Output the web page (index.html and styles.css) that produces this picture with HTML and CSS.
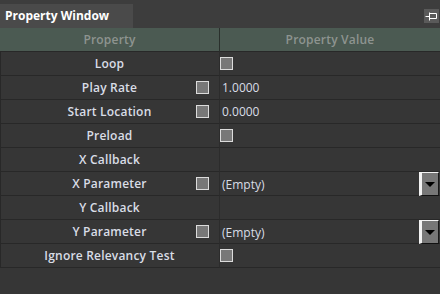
FILE: index.html
```html
<!DOCTYPE html>
<html lang="en">
<head>
  <meta charset="UTF-8">
  <title>Property Window</title>
  <link rel="stylesheet" href="styles.css">
</head>
<body>
  <div class="window">
    <div class="titlebar">
      <div class="tab">Property Window</div>
      <div class="pin">
        <svg width="15" height="14" viewBox="0 0 15 14">
          <path d="M1.5 7.5H5.5M5.5 3.5V11.5M5.5 4.5H12.5V9.5H5.5" fill="none" stroke="#fff" stroke-width="1"/>
        </svg>
      </div>
    </div>

    <div class="grid">
      <div class="head name">Property</div>
      <div class="head value">Property Value</div>

      <div class="cell name"><span class="label">Loop</span></div>
      <div class="cell value"><span class="check"></span></div>

      <div class="cell name"><span class="label">Play Rate</span><span class="check"></span></div>
      <div class="cell value"><span class="text">1.0000</span></div>

      <div class="cell name"><span class="label">Start Location</span><span class="check"></span></div>
      <div class="cell value"><span class="text">0.0000</span></div>

      <div class="cell name"><span class="label">Preload</span></div>
      <div class="cell value"><span class="check"></span></div>

      <div class="cell name"><span class="label">X Callback</span></div>
      <div class="cell value"></div>

      <div class="cell name"><span class="label">X Parameter</span><span class="check"></span></div>
      <div class="cell value"><span class="text">(Empty)</span><span class="drop"></span></div>

      <div class="cell name"><span class="label">Y Callback</span></div>
      <div class="cell value"></div>

      <div class="cell name"><span class="label">Y Parameter</span><span class="check"></span></div>
      <div class="cell value"><span class="text">(Empty)</span><span class="drop"></span></div>

      <div class="cell name"><span class="label">Ignore Relevancy Test</span></div>
      <div class="cell value"><span class="check"></span></div>
    </div>
  </div>
</body>
</html>
```

FILE: styles.css
```css
:root {
  --bar-color: #3d3d3d;
  --tab-color: #4a4a4a;
  --head-color: #4b5a52;
  --row-color: #363636;
  --line-color: #282828;
  --text-color: #d9dde6;
  --head-text: #8e9490;
  --body-font: "Open Sans", "Noto Sans", sans-serif;
}

* {
  margin: 0;
  padding: 0;
  box-sizing: border-box;
  font-family: var(--body-font);
}

body {
  width: 440px;
  height: 294px;
  background: var(--row-color);
  overflow: hidden;
}

.window {
  display: flex;
  flex-direction: column;
  height: 100%;
}

.titlebar {
  display: flex;
  justify-content: space-between;
  align-items: flex-start;
  height: 28px;
  background: var(--bar-color);
}

.tab {
  width: 133px;
  height: 24px;
  margin-top: 4px;
  padding-left: 5px;
  background: var(--tab-color);
  color: #fff;
  font-size: 12px;
  font-weight: 700;
  line-height: 24px;
}

.pin {
  width: 15px;
  height: 14px;
  margin-top: 9px;
  margin-right: 1px;
  background: #5a5a5a;
}

.pin svg {
  display: block;
}

.grid {
  display: grid;
  grid-template-columns: 220px 220px;
  grid-auto-rows: 24px;
}

.head {
  display: flex;
  align-items: center;
  justify-content: center;
  background: var(--head-color);
  color: var(--head-text);
  font-size: 12px;
  font-weight: 600;
  letter-spacing: 0.2px;
  border-bottom: 1px solid var(--line-color);
}

.head.name {
  border-right: 1px solid #2a302c;
}

.cell {
  display: grid;
  align-items: center;
  border-bottom: 1px solid var(--line-color);
  font-size: 12px;
  color: var(--text-color);
}

.cell.name {
  grid-template-columns: 1fr;
  border-right: 1px solid #2c2c2c;
  box-shadow: inset 1px 0 0 var(--line-color);
}

.cell.name > * {
  grid-area: 1 / 1;
}

.label {
  justify-self: center;
  font-weight: 600;
  letter-spacing: 0.2px;
}

.cell.name .check {
  justify-self: end;
  margin-right: 10px;
}

.cell.value {
  grid-template-columns: 1fr auto;
}

.text {
  padding-left: 2px;
}

.check {
  display: block;
  width: 13px;
  height: 13px;
  background: #787878;
  border: 1px solid #dcdcdc;
}

.drop {
  position: relative;
  width: 20px;
  height: 24px;
  margin-right: 1px;
  align-self: start;
  background: #777;
  border-left: 3px solid #f2f2f2;
  border-top: 1px solid #f2f2f2;
  border-right: 1px solid #1a1a1a;
  border-bottom: 1px solid #111;
}

.drop::after {
  content: "";
  position: absolute;
  left: 3px;
  top: 9px;
  border-left: 5px solid transparent;
  border-right: 5px solid transparent;
  border-top: 5px solid #000;
}
```
